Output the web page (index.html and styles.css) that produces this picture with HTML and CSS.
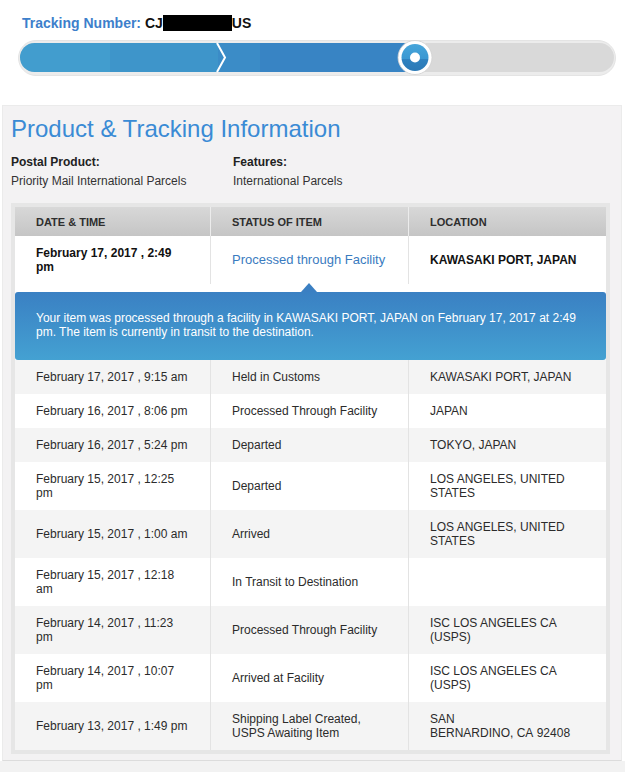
FILE: index.html
```html
<!DOCTYPE html>
<html lang="en">
<head>
<meta charset="utf-8">
<title>Product &amp; Tracking Information</title>
<link rel="stylesheet" href="styles.css">
</head>
<body>
<div class="tracking">
  <div class="tn"><span class="tn-label">Tracking Number:</span> <span class="tn-num">CJ<span class="redact"></span>US</span></div>
  <svg class="progress" width="598" height="37" viewBox="0 0 598 37" aria-hidden="true">
    <defs>
      <clipPath id="barclip"><rect x="2" y="3" width="594" height="29" rx="14.5"/></clipPath>
      <linearGradient id="knob" x1="0" y1="0" x2="0" y2="1">
        <stop offset="0" stop-color="#47a5da"/>
        <stop offset="0.55" stop-color="#3a98d2"/>
        <stop offset="0.55" stop-color="#2f82c0"/>
        <stop offset="1" stop-color="#2b79b6"/>
      </linearGradient>
    </defs>
    <rect x="0.5" y="0.5" width="597" height="35" rx="17.5" fill="#ececec" stroke="#e4e4e4"/>
    <g clip-path="url(#barclip)">
      <rect x="2" y="3" width="594" height="29" fill="#d9d9d9"/>
      <rect x="2" y="3" width="90" height="29" fill="#429dce"/>
      <rect x="92" y="3" width="108" height="29" fill="#3e95ca"/>
      <rect x="200" y="3" width="42" height="29" fill="#3b8cc7"/>
      <rect x="242" y="3" width="160" height="29" fill="#3884c4"/>
    </g>
    <polyline points="199,3 207,17.5 199,32" fill="none" stroke="#ffffff" stroke-width="2"/>
    <circle cx="397" cy="17.5" r="17" fill="#ffffff" stroke="#d0d0d0" stroke-width="0.8"/>
    <circle cx="397" cy="17.5" r="13.5" fill="url(#knob)"/>
    <circle cx="397" cy="17.5" r="5" fill="#ffffff"/>
  </svg>
</div>

<div class="panel">
  <h1 class="title">Product &amp; Tracking Information</h1>
  <div class="info">
    <div class="info-col">
      <div class="info-label">Postal Product:</div>
      <div class="info-value">Priority Mail International Parcels</div>
    </div>
    <div class="info-col">
      <div class="info-label">Features:</div>
      <div class="info-value">International Parcels</div>
    </div>
  </div>

  <div class="table-wrap">
    <table class="history">
      <colgroup>
        <col class="c-date"><col class="c-status"><col class="c-loc">
      </colgroup>
      <thead>
        <tr><th>DATE &amp; TIME</th><th>STATUS OF ITEM</th><th>LOCATION</th></tr>
      </thead>
      <tbody>
        <tr class="latest">
          <td class="strong">February 17, 2017 , 2:49 pm</td>
          <td class="status-link">Processed through Facility</td>
          <td class="strong">KAWASAKI PORT, JAPAN</td>
        </tr>
        <tr class="detail-row">
          <td colspan="3">
            <div class="callout">Your item was processed through a facility in KAWASAKI PORT, JAPAN on February 17, 2017 at 2:49 pm. The item is currently in transit to the destination.</div>
          </td>
        </tr>
        <tr class="alt"><td>February 17, 2017 , 9:15 am</td><td>Held in Customs</td><td>KAWASAKI PORT, JAPAN</td></tr>
        <tr><td>February 16, 2017 , 8:06 pm</td><td>Processed Through Facility</td><td>JAPAN</td></tr>
        <tr class="alt"><td>February 16, 2017 , 5:24 pm</td><td>Departed</td><td>TOKYO, JAPAN</td></tr>
        <tr><td>February 15, 2017 , 12:25 pm</td><td>Departed</td><td>LOS ANGELES, UNITED STATES</td></tr>
        <tr class="alt"><td>February 15, 2017 , 1:00 am</td><td>Arrived</td><td>LOS ANGELES, UNITED STATES</td></tr>
        <tr><td>February 15, 2017 , 12:18 am</td><td>In Transit to Destination</td><td></td></tr>
        <tr class="alt"><td>February 14, 2017 , 11:23 pm</td><td>Processed Through Facility</td><td>ISC LOS ANGELES CA (USPS)</td></tr>
        <tr><td>February 14, 2017 , 10:07 pm</td><td>Arrived at Facility</td><td>ISC LOS ANGELES CA (USPS)</td></tr>
        <tr class="alt"><td>February 13, 2017 , 1:49 pm</td><td>Shipping Label Created, USPS Awaiting Item</td><td>SAN BERNARDINO,&nbsp;CA&nbsp;92408</td></tr>
      </tbody>
    </table>
  </div>
</div>
<div class="footer"></div>
</body>
</html>
```

FILE: styles.css
```css
* { box-sizing: border-box; }

body {
  margin: 0;
  background: #ffffff;
  color: #2b2b2b;
  font-family: "Liberation Sans", Arial, sans-serif;
}

.tracking {
  padding: 15px 0 0 18px;
}

.tn {
  padding-left: 4px;
  font-size: 14px;
  line-height: 16px;
  font-weight: bold;
}

.tn-label { color: #3d7fcb; }
.tn-num { color: #111; }

.redact {
  display: inline-block;
  width: 69px;
  height: 16px;
  background: #000;
  vertical-align: top;
}

.progress {
  display: block;
  margin-top: 9px;
}

.panel {
  margin: 28px 3px 0 2px;
  background: #f3f2f3;
  border: 1px solid #ebebeb;
  border-bottom-color: #dcdcdc;
  padding: 9px 11px 6px 8px;
}

.title {
  margin: 0;
  font-size: 24px;
  line-height: 28px;
  font-weight: normal;
  color: #3a8bd5;
}

.info {
  display: grid;
  grid-template-columns: 222px 1fr;
  margin-top: 12px;
  font-size: 12px;
  line-height: 14px;
}

.info-label { font-weight: bold; color: #222; }
.info-value { margin-top: 5px; color: #333; }

.table-wrap {
  margin-top: 15px;
  width: 599px;
  border: 4px solid #e6e6e6;
}

.history {
  width: 591px;
  border-collapse: separate;
  border-spacing: 0;
  table-layout: fixed;
  font-size: 12px;
  line-height: 14px;
}

.c-date { width: 196px; }
.c-status { width: 198px; }
.c-loc { width: 197px; }

.history th {
  height: 29px;
  padding: 0 10px 0 21px;
  text-align: left;
  font-size: 11px;
  font-weight: bold;
  color: #2e2e2e;
  background: linear-gradient(#d8d8d8, #c5c5c5);
  border-right: 1px solid #ececec;
}
.history th:last-child { border-right: 0; }

.history td {
  padding: 10px 19px 10px 21px;
  vertical-align: middle;
  background: #ffffff;
  color: #2b2b2b;
  border-right: 1px solid #e3e3e3;
}
.history td:nth-child(2) { padding-right: 20px; }
.history td:last-child { border-right: 0; padding-right: 25px; }

.history tr.alt td { background: #f4f4f4; }

.history td.strong { font-weight: bold; color: #111; }
.history td.status-link { font-size: 13px; color: #3a7bc0; }

.history .detail-row td {
  padding: 8px 0 0 0;
  border-right: 0;
  background: #ffffff;
}

.callout {
  position: relative;
  background: linear-gradient(#3a80c3, #44a1d2);
  border-radius: 3px;
  padding: 19px 12px 21px 21px;
  color: #ffffff;
  font-size: 12px;
  line-height: 14px;
}

.callout::before {
  content: "";
  position: absolute;
  top: -9px;
  left: 286px;
  border-left: 8px solid transparent;
  border-right: 8px solid transparent;
  border-bottom: 9px solid #3b7fc2;
}

.footer {
  height: 20px;
  background: #f2f2f2;
}
```
